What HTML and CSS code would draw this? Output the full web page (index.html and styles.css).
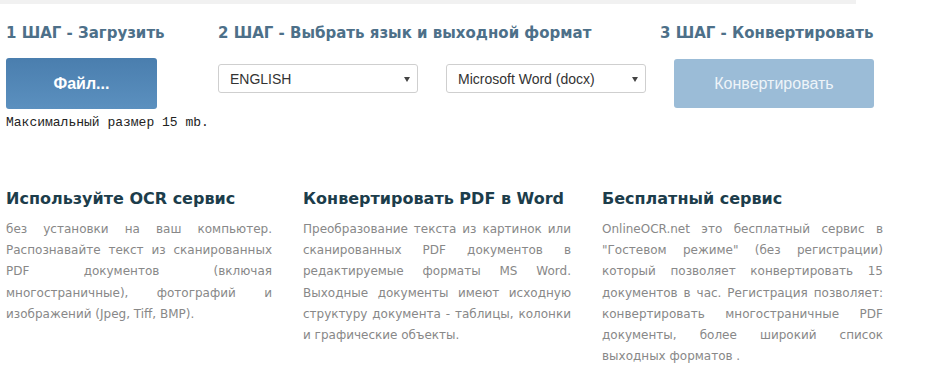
FILE: index.html
```html
<!DOCTYPE html>
<html lang="ru">
<head>
  <meta charset="UTF-8">
  <title>OnlineOCR</title>
  <link rel="stylesheet" href="styles.css">
</head>
<body>
<div class="topbar"></div>
<div class="page">
  <div class="steps">
    <div class="step step1">
      <h3>1 ШАГ - Загрузить</h3>
      <a class="btn-file" href="#">Файл...</a>
      <p class="maxsize">Максимальный размер 15 mb.</p>
    </div>
    <div class="step step2">
      <h3>2 ШАГ - Выбрать язык и выходной формат</h3>
      <div class="selects">
        <div class="select"><span>ENGLISH</span><i></i></div>
        <div class="select"><span>Microsoft Word (docx)</span><i></i></div>
      </div>
    </div>
    <div class="step step3">
      <h3>3 ШАГ - Конвертировать</h3>
      <a class="btn-convert" href="#">Конвертировать</a>
    </div>
  </div>

  <div class="info">
    <div class="col col1">
      <h2>Используйте OCR сервис</h2>
      <p>без установки на ваш компьютер. Распознавайте текст из сканированных PDF документов (включая многостраничные), фотографий и изображений (Jpeg, Tiff, BMP).</p>
    </div>
    <div class="col col2">
      <h2>Конвертировать PDF в Word</h2>
      <p>Преобразование текста из картинок или сканированных PDF документов в редактируемые форматы MS Word. Выходные документы имеют исходную структуру документа - таблицы, колонки и графические объекты.</p>
    </div>
    <div class="col col3">
      <h2>Бесплатный сервис</h2>
      <p>OnlineOCR.net это бесплатный сервис в "Гостевом режиме" (без регистрации) который позволяет конвертировать 15 документов в час. Регистрация позволяет: конвертировать многостраничные PDF документы, более широкий список выходных форматов .</p>
    </div>
  </div>
</div>
</body>
</html>
```

FILE: styles.css
```css
* {
  margin: 0;
  padding: 0;
  box-sizing: border-box;
}

body {
  background: #fff;
  font-family: "DejaVu Sans", Verdana, sans-serif;
}

.topbar {
  width: 856px;
  height: 4px;
  background-color: #f1f1f1;
}

.page {
  padding-left: 6px;
}

.steps {
  display: flex;
  padding-top: 20px;
}

.step h3 {
  font-size: 15px;
  font-weight: bold;
  color: #4d7089;
  line-height: 18px;
  white-space: nowrap;
}

.step1 {
  width: 212px;
}

.step2 {
  width: 442px;
}

.btn-file {
  display: flex;
  align-items: center;
  justify-content: center;
  width: 151px;
  height: 51px;
  margin-top: 16px;
  border-radius: 3px;
  background: linear-gradient(#4a7eae, #5b90bf);
  color: #fff;
  font-family: "Liberation Sans", Arial, sans-serif;
  font-weight: bold;
  font-size: 16px;
  text-decoration: none;
}

.maxsize {
  margin-top: 6px;
  font-family: "Liberation Mono", "Courier New", monospace;
  font-size: 13px;
  color: #222;
}

.selects {
  display: flex;
  gap: 28px;
  margin-top: 22px;
}

.select {
  position: relative;
  display: flex;
  align-items: center;
  width: 200px;
  height: 29px;
  padding-left: 11px;
  border: 1px solid #cfcfcf;
  border-radius: 3px;
  font-family: "Liberation Sans", Arial, sans-serif;
  font-size: 14px;
  color: #333;
}

.select i {
  position: absolute;
  right: 7px;
  top: 12px;
  border-left: 3px solid transparent;
  border-right: 3px solid transparent;
  border-top: 5px solid #444;
}

.btn-convert {
  display: flex;
  align-items: center;
  justify-content: center;
  width: 200px;
  height: 49px;
  margin-top: 17px;
  margin-left: 14px;
  border-radius: 3px;
  background-color: #9bbcd7;
  color: #eef4f9;
  font-family: "Liberation Sans", Arial, sans-serif;
  font-size: 16px;
  text-decoration: none;
}

.info {
  display: flex;
  margin-top: 58px;
}

.col h2 {
  font-size: 16px;
  font-weight: bold;
  color: #1c3d4b;
  line-height: 22px;
  white-space: nowrap;
}

.col p {
  margin-top: 9px;
  font-size: 12px;
  line-height: 21.2px;
  color: #888;
  text-align: justify;
}

.col1 {
  width: 297px;
  padding-right: 31px;
}

.col2 {
  width: 299px;
  padding-right: 31px;
}

.col3 {
  width: 281px;
}
```
